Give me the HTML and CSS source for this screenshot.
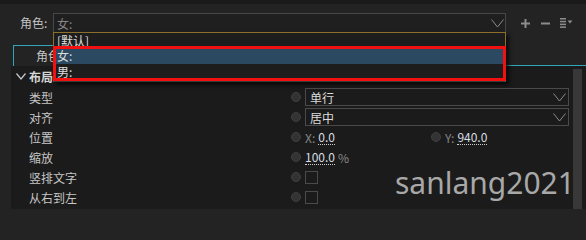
FILE: index.html
```html
<!DOCTYPE html>
<html>
<head>
<meta charset="utf-8">
<link rel="stylesheet" href="styles.css">
</head>
<body>
<div class="page">
  <div class="topstrip"></div>
  <div class="role-row">
    <span class="role-label">角色:</span>
    <div class="role-select">
      <span class="placeholder">女:</span>
      <svg class="chev" width="13" height="9" viewBox="0 0 13 9"><path d="M0.5 0.5 L6.5 8 L12.5 0.5" fill="none" stroke="#8a8a8a" stroke-width="1"/></svg>
    </div>
    <div class="tools">
      <svg width="9" height="9" viewBox="0 0 9 9"><rect x="0" y="3.5" width="9" height="2" fill="#8c8c8c"/><rect x="3.5" y="0" width="2" height="9" fill="#8c8c8c"/></svg>
      <svg width="9" height="9" viewBox="0 0 9 9"><rect x="0" y="3.5" width="9" height="2" fill="#8c8c8c"/></svg>
      <svg width="13" height="10" viewBox="0 0 13 10"><rect x="0" y="0" width="6" height="1.5" fill="#8c8c8c"/><rect x="0" y="2.8" width="6" height="1.5" fill="#8c8c8c"/><rect x="0" y="5.6" width="6" height="1.5" fill="#8c8c8c"/><rect x="0" y="8.4" width="6" height="1.5" fill="#8c8c8c"/><path d="M7.5 2.5 L12.5 2.5 L10 5.5 Z" fill="#8c8c8c"/></svg>
    </div>
  </div>
  <div class="tabs">
    <div class="tab-gap"></div>
    <div class="tab">角色</div>
    <div class="tab-fill"></div>
  </div>
  <div class="body">
    <div class="gutter"></div>
    <div class="content">
      <div class="props">
        <div class="section">
          <svg width="10" height="7" viewBox="0 0 10 7"><path d="M0.5 0.5 L5 6 L9.5 0.5" fill="none" stroke="#c8c8c8" stroke-width="1.2"/></svg>
          <span>布局</span>
        </div>
        <div class="row">
          <span class="label">类型</span>
          <div class="value"><span class="radio"></span><div class="select"><span>单行</span><svg class="chev" width="13" height="9" viewBox="0 0 13 9"><path d="M0.5 0.5 L6.5 8 L12.5 0.5" fill="none" stroke="#8a8a8a" stroke-width="1"/></svg></div></div>
        </div>
        <div class="row">
          <span class="label">对齐</span>
          <div class="value"><span class="radio"></span><div class="select"><span>居中</span><svg class="chev" width="13" height="9" viewBox="0 0 13 9"><path d="M0.5 0.5 L6.5 8 L12.5 0.5" fill="none" stroke="#8a8a8a" stroke-width="1"/></svg></div></div>
        </div>
        <div class="row">
          <span class="label">位置</span>
          <div class="value split">
            <div class="half"><span class="radio"></span><span class="axis">X:</span><span class="num">0.0</span></div>
            <div class="half"><span class="radio"></span><span class="axis">Y:</span><span class="num">940.0</span></div>
          </div>
        </div>
        <div class="row">
          <span class="label">缩放</span>
          <div class="value"><span class="radio"></span><span class="num">100.0</span><span class="unit">%</span></div>
        </div>
        <div class="row">
          <span class="label">竖排文字</span>
          <div class="value"><span class="radio"></span><span class="check"></span></div>
        </div>
        <div class="row">
          <span class="label">从右到左</span>
          <div class="value"><span class="radio"></span><span class="check"></span></div>
        </div>
      </div>
      <div class="scrollbar"></div>
    </div>
  </div>

  <div class="dropdown">
    <div class="item">[默认]</div>
    <div class="item active">女:</div>
    <div class="item">男:</div>
  </div>
  <div class="mark"></div>
  <div class="watermark">sanlang2021</div>
</div>
</body>
</html>
```

FILE: styles.css
```css
html, body {
  margin: 0;
  padding: 0;
  height: 209px;
  overflow: hidden;
  background: #232323;
}
.page {
  position: relative;
  width: 586px;
  height: 209px;
  overflow: hidden;
  background: #232323;
  font-family: "Noto Sans CJK SC", "Noto Sans", sans-serif;
  font-size: 12px;
  color: #c6c6c6;
}
.topstrip {
  height: 4px;
  background: #1a1a1a;
}
.role-row {
  display: flex;
  align-items: center;
  height: 20px;
  margin-top: 9px;
}
.role-label {
  width: 53px;
  flex: none;
  padding-left: 20px;
  box-sizing: border-box;
  color: #c2c2c2;
  line-height: 20px;
  white-space: nowrap;
}
.role-select {
  width: 453px;
  flex: none;
  height: 20px;
  box-sizing: border-box;
  border: 1px solid #474747;
  background: #1f1f1f;
  display: flex;
  align-items: center;
  justify-content: space-between;
  padding: 0 1px 0 3px;
}
.placeholder {
  color: #858585;
}
.tools {
  display: flex;
  align-items: center;
  margin-left: 15px;
  gap: 11px;
}
.tools svg:last-child {
  margin-left: -1px;
}
.tabs {
  display: flex;
  height: 21px;
  margin-top: 12px;
}
.tab-gap {
  width: 13px;
}
.tab {
  width: 70px;
  box-sizing: border-box;
  border: 1px solid #33a6b7;
  border-bottom: none;
  color: #c6c6c6;
  padding-left: 22px;
  line-height: 20px;
}
.tab-fill {
  flex: 1;
  border-bottom: 1px solid #33a6b7;
}
.body {
  display: flex;
  height: 143px;
}
.gutter {
  width: 11px;
  background: #232323;
}
.content {
  flex: 1;
  display: flex;
  background: #1b1b1b;
}
.props {
  width: 562px;
}
.section {
  height: 21px;
  display: flex;
  align-items: center;
  padding-left: 5px;
  gap: 3px;
  font-weight: bold;
  color: #d6d6d6;
}
.row {
  height: 20px;
  display: grid;
  grid-template-columns: 279px 1fr;
  align-items: center;
}
.label {
  padding-left: 18px;
  color: #c6c6c6;
}
.value {
  display: flex;
  align-items: center;
  padding-left: 1px;
  gap: 4px;
  padding-right: 4px;
}
.split {
  gap: 0;
}
.half {
  width: 140px;
  display: flex;
  align-items: center;
  gap: 4px;
}
.radio {
  width: 10px;
  height: 10px;
  box-sizing: border-box;
  border-radius: 50%;
  background: #333333;
  border: 1px solid #3f3f3f;
  flex: none;
}
.select {
  flex: 1;
  height: 18px;
  box-sizing: border-box;
  border: 1px solid #4a4a4a;
  display: flex;
  align-items: center;
  justify-content: space-between;
  padding: 0 2px 0 4px;
  color: #dcdcdc;
}
.axis {
  color: #858585;
  margin-right: -1px;
}
.num {
  color: #d8dde2;
  line-height: 14px;
  border-bottom: 1px dotted #cfcfcf;
}
.unit {
  color: #8c8c8c;
  margin-left: -1px;
}
.check {
  width: 13px;
  height: 13px;
  box-sizing: border-box;
  border: 1px solid #4a4a4a;
}
.scrollbar {
  width: 9px;
  margin-top: 3px;
  background: #383838;
}
.dropdown {
  position: absolute;
  left: 53px;
  top: 32px;
  width: 453px;
  box-sizing: border-box;
  border: 1px solid #8d6e2a;
  border-bottom-color: #3a3a3a;
  background: #1d1d1d;
  padding-bottom: 1px;
  box-shadow: 3px 3px 4px rgba(0, 0, 0, 0.7);
  color: #dedede;
}
.item {
  height: 16px;
  line-height: 16px;
  padding-left: 3px;
}
.item:first-child {
  height: 15px;
  line-height: 15px;
}
.item.active {
  background: #2b4a61;
}
.mark {
  position: absolute;
  left: 53px;
  top: 46px;
  width: 453px;
  height: 35px;
  box-sizing: border-box;
  border: 3px solid #f21010;
}
.watermark {
  position: absolute;
  left: 395px;
  top: 169px;
  font-family: "Noto Sans", sans-serif;
  font-size: 30px;
  line-height: 28px;
  color: #a8a8a8;
}
```
